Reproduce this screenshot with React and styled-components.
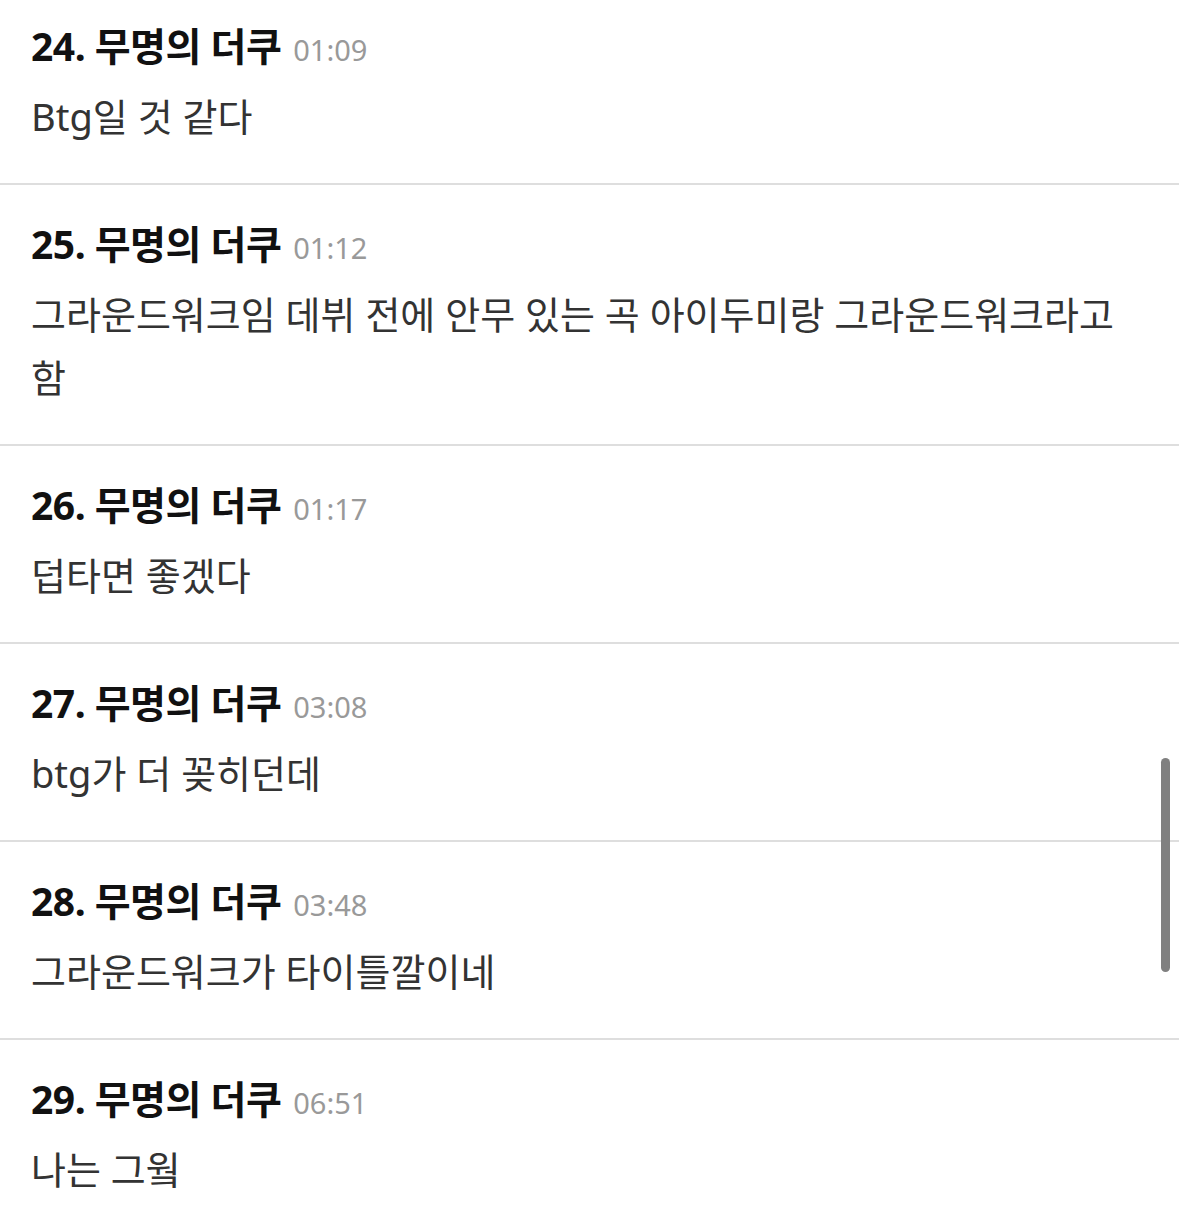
import React from "react";
import styled, { createGlobalStyle } from "styled-components";

const GlobalStyle = createGlobalStyle`
  html, body {
    margin: 0;
    padding: 0;
    background: #fff;
    overflow: hidden;
  }
  body {
    font-family: "Noto Sans", "Noto Sans CJK KR", sans-serif;
  }
`;

const comments = [
  { no: 24, time: "01:09", text: "Btg일 것 같다" },
  {
    no: 25,
    time: "01:12",
    text: "그라운드워크임 데뷔 전에 안무 있는 곡 아이두미랑 그라운드워크라고 함",
  },
  { no: 26, time: "01:17", text: "덥타면 좋겠다" },
  { no: 27, time: "03:08", text: "btg가 더 꽂히던데" },
  { no: 28, time: "03:48", text: "그라운드워크가 타이틀깔이네" },
  { no: 29, time: "06:51", text: "나는 그웤" },
];

function App() {
  return (
    <>
      <GlobalStyle />
      <Page>
        <List>
          {comments.map((c) => (
            <Item key={c.no}>
              <Header>
                {c.no}. 무명의 더쿠
                <Time>{c.time}</Time>
              </Header>
              <Body>{c.text}</Body>
            </Item>
          ))}
        </List>
        <ScrollThumb />
      </Page>
    </>
  );
}

const Page = styled.div`
  position: relative;
  width: 1179px;
  height: 1232px;
  overflow: hidden;
`;

const List = styled.ul`
  list-style: none;
  margin: -13px 0 0;
  padding: 0;
`;

const Item = styled.li`
  padding: 27px 36px 35px 31px;
  border-bottom: 2px solid #dedede;
`;

const Header = styled.div`
  font-size: 39px;
  font-weight: 700;
  line-height: 64px;
  color: #111;
  letter-spacing: -0.5px;
`;

const Time = styled.span`
  margin-left: 12px;
  font-size: 29px;
  font-weight: 400;
  color: #999;
  letter-spacing: 0;
`;

const Body = styled.p`
  margin: 3px 0 0;
  font-size: 38px;
  line-height: 63px;
  color: #333;
  word-break: keep-all;
`;

const ScrollThumb = styled.div`
  position: absolute;
  top: 758px;
  left: 1161px;
  width: 9px;
  height: 214px;
  border-radius: 5px;
  background: #808080;
`;

export default App;
